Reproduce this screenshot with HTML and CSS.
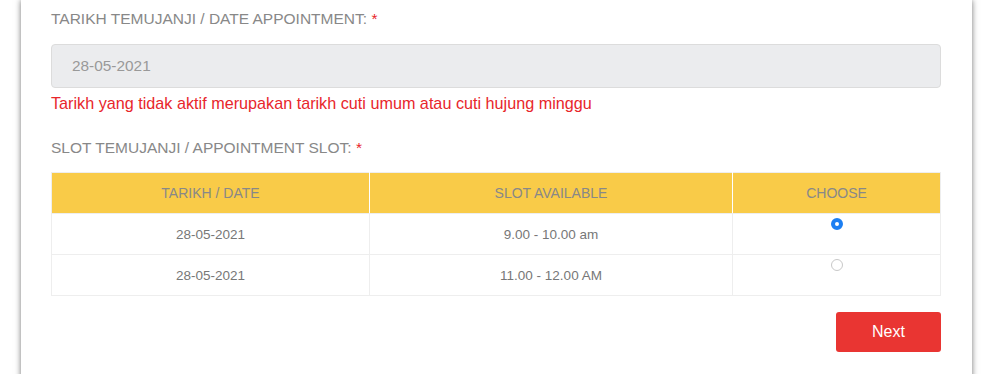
FILE: index.html
```html
<!DOCTYPE html>
<html lang="ms">
<head>
    <meta charset="UTF-8">
    <meta name="viewport" content="width=device-width, initial-scale=1.0">
    <title>Temujanji</title>
    <link rel="stylesheet" href="styles.css">
</head>
<body>
    <div class="card">
        <div class="form-group">
            <label class="field-label">TARIKH TEMUJANJI / DATE APPOINTMENT: <span class="req">*</span></label>
            <input type="text" class="date-input" value="28-05-2021" disabled>
            <p class="error-text">Tarikh yang tidak aktif merupakan tarikh cuti umum atau cuti hujung minggu</p>
        </div>

        <div class="form-group">
            <label class="field-label">SLOT TEMUJANJI / APPOINTMENT SLOT: <span class="req">*</span></label>
            <table class="slot-table">
                <thead>
                    <tr>
                        <th class="col-date">TARIKH / DATE</th>
                        <th class="col-slot">SLOT AVAILABLE</th>
                        <th class="col-choose">CHOOSE</th>
                    </tr>
                </thead>
                <tbody>
                    <tr>
                        <td>28-05-2021</td>
                        <td>9.00 - 10.00 am</td>
                        <td><input type="radio" class="slot-radio" name="slot" checked></td>
                    </tr>
                    <tr>
                        <td>28-05-2021</td>
                        <td>11.00 - 12.00 AM</td>
                        <td><input type="radio" class="slot-radio" name="slot"></td>
                    </tr>
                </tbody>
            </table>
        </div>

        <div class="actions">
            <button class="btn-next">Next</button>
        </div>
    </div>
</body>
</html>
```

FILE: styles.css
```css
body {
    margin: 0;
    background: #fff;
    font-family: "Liberation Sans", Arial, sans-serif;
    overflow: hidden;
}
.card {
    margin-left: 21px;
    width: 890px;
    padding: 9px 31px 40px 30px;
    background: #fff;
    box-shadow: 0 0 6px rgba(0, 0, 0, 0.55);
    min-height: 400px;
}
.field-label {
    display: block;
    font-size: 15.5px;
    line-height: 20px;
    color: #888;
    margin-bottom: 15px;
}
.req {
    color: #e8262b;
}
.date-input {
    display: block;
    box-sizing: border-box;
    width: 100%;
    height: 44px;
    padding: 0 20px;
    font-family: inherit;
    font-size: 15.4px;
    color: #999;
    background: #ebecee;
    border: 1px solid #dcdcdc;
    border-radius: 4px;
}
.error-text {
    margin: 5px 0 25px;
    font-size: 16.2px;
    line-height: 20px;
    color: #e8262b;
}
.slot-table {
    width: 100%;
    border-collapse: collapse;
    font-size: 13.5px;
    color: #777;
    margin-top: -1px;
}
.slot-table th {
    background: #f9cb48;
    color: #888;
    font-size: 14px;
    font-weight: normal;
    height: 40px;
    padding: 0;
    border: 1px solid #eee;
    border-left-color: #fff;
    border-right-color: #fff;
}
.slot-table th:first-child {
    border-left-color: #eee;
}
.slot-table th:last-child {
    border-right-color: #eee;
}
.col-date {
    width: 317px;
}
.col-slot {
    width: 362px;
}
.slot-table td {
    height: 40px;
    padding: 0;
    border: 1px solid #eee;
    text-align: center;
    vertical-align: middle;
}
.slot-radio {
    appearance: none;
    -webkit-appearance: none;
    box-sizing: border-box;
    width: 12px;
    height: 12px;
    margin: 0;
    border: 1px solid #c8c8c8;
    border-radius: 50%;
    background: #fff;
    position: relative;
    top: -9px;
}
.slot-radio:checked {
    border: 4px solid #1c7ff2;
}
.actions {
    display: flex;
    justify-content: flex-end;
    margin-top: 16px;
}
.btn-next {
    width: 105px;
    height: 40px;
    background: #e93532;
    color: #fff;
    border: none;
    border-radius: 3px;
    font-family: inherit;
    font-size: 16px;
}
```
